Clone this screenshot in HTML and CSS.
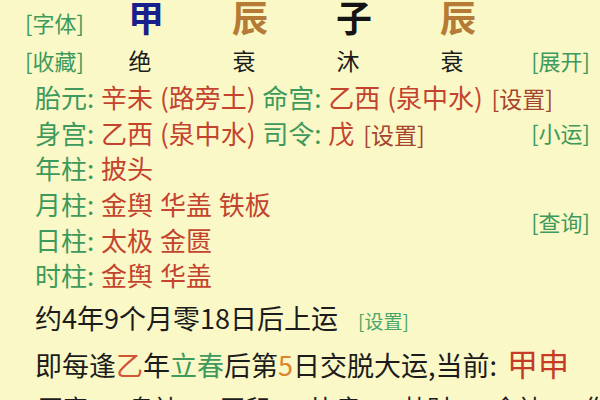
FILE: index.html
```html
<!DOCTYPE html>
<html lang="zh-CN">
<head>
    <meta charset="UTF-8">
    <meta name="viewport" content="width=device-width, initial-scale=1.0">
    <title>八字排盘</title>
    <link rel="stylesheet" href="styles.css">
</head>
<body>
    <div class="screen">
        <!-- 四柱 -->
        <div class="pillars top-row">
            <span class="link">[字体]</span>
            <span class="gz jia">甲</span>
            <span class="gz chen">辰</span>
            <span class="gz zi">子</span>
            <span class="gz chen">辰</span>
            <span></span>
        </div>
        <div class="pillars phase-row">
            <span class="link">[收藏]</span>
            <span class="phase">绝</span>
            <span class="phase">衰</span>
            <span class="phase">沐</span>
            <span class="phase">衰</span>
            <span class="link side">[展开]</span>
        </div>

        <!-- 命盘信息 -->
        <div class="info">
            <div class="line"><span class="key">胎元:</span> <span class="val">辛未 (路旁土)</span> <span class="key">命宫:</span> <span class="val">乙西 (泉中水)</span> <span class="set">[设置]</span></div>
            <div></div>
            <div class="line"><span class="key">身宫:</span> <span class="val">乙西 (泉中水)</span> <span class="key">司令:</span> <span class="val">戊</span> <span class="set">[设置]</span></div>
            <div class="link side">[小运]</div>
            <div class="line"><span class="key">年柱:</span> <span class="val">披头</span></div>
            <div></div>
            <div class="line"><span class="key">月柱:</span> <span class="val">金舆 华盖 铁板</span></div>
            <div class="link side query">[查询]</div>
            <div class="line"><span class="key">日柱:</span> <span class="val">太极 金匮</span></div>
            <div class="line"><span class="key">时柱:</span> <span class="val">金舆 华盖</span></div>
            <div></div>
        </div>

        <!-- 大运 -->
        <p class="luck first">约4年9个月零18日后上运 <span class="link small">[设置]</span></p>
        <p class="luck">即每逢<span class="yi">乙</span>年<span class="spring">立春</span>后第<span class="num">5</span>日交脱大运,当前: <span class="current">甲申</span></p>

        <div class="gods">
            <span>正官</span>
            <span>枭神</span>
            <span>正印</span>
            <span>比肩</span>
            <span>劫财</span>
            <span>食神</span>
            <span>伤官</span>
        </div>
    </div>
</body>
</html>
```

FILE: styles.css
```css
/* 页面底色 */
body {
    margin: 0;
    background-color: #faf8c6;
    font-family: "Noto Sans CJK SC", "Noto Sans", sans-serif;
    color: #1c1c1c;
    overflow: hidden;
}

.screen {
    width: 600px;
    height: 400px;
    overflow: hidden;
}

/* 链接样式 [xx] */
.link {
    color: #3d9a5c;
    font-size: 22px;
    white-space: nowrap;
}

.link.small {
    font-size: 19px;
    margin-left: 14px;
    color: #4aa56a;
}

.side {
    justify-self: end;
    padding-right: 10px;
}

/* 四柱 */
.pillars {
    display: grid;
    grid-template-columns: 94px repeat(4, 104px) 1fr;
    align-items: baseline;
}

.pillars .link {
    padding-left: 25px;
}

.pillars .side {
    padding-left: 0;
}

.top-row {
    margin-top: -2px;
    line-height: 37px;
}

.gz {
    font-size: 36px;
    font-weight: bold;
    text-align: center;
}

.jia {
    color: #15208c;
}

.chen {
    color: #b47a36;
}

.zi {
    color: #141414;
}

.phase-row {
    margin-top: 0;
    line-height: 38px;
}

.phase {
    font-size: 23px;
    text-align: center;
    padding-right: 12px;
}

/* 信息区 */
.info {
    display: grid;
    grid-template-columns: minmax(0, 1fr) auto;
    grid-auto-rows: 35.6px;
    align-items: center;
    padding-left: 35px;
}

.line {
    font-size: 26px;
    white-space: nowrap;
    word-spacing: 1px;
}

.key {
    color: #3d9a5c;
}

.val {
    color: #c4432e;
}

.set {
    color: #a5452f;
    font-size: 23px;
    margin-left: 2px;
}

.query {
    grid-row: 4 / 6;
    grid-column: 2;
}

/* 大运 */
.luck {
    margin: 0;
    padding-left: 35px;
    font-size: 27px;
    line-height: 42px;
    white-space: nowrap;
}

.luck.first {
    margin-top: 4px;
}

.yi {
    color: #cf5537;
}

.spring {
    color: #3d9a5c;
}

.num {
    color: #de8430;
}

.current {
    color: #c63a28;
    font-size: 31px;
    margin-left: 4px;
}

/* 十神 */
.gods {
    display: flex;
    gap: 41px;
    padding-left: 38px;
    font-size: 25px;
    line-height: 42px;
    white-space: nowrap;
}
```
